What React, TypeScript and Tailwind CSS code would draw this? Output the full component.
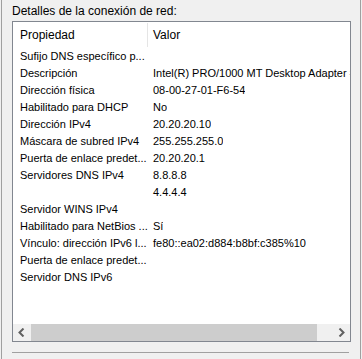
const rows: [string, string][] = [
  ["Sufijo DNS específico p...", ""],
  ["Descripción", "Intel(R) PRO/1000 MT Desktop Adapter #2"],
  ["Dirección física", "08-00-27-01-F6-54"],
  ["Habilitado para DHCP", "No"],
  ["Dirección IPv4", "20.20.20.10"],
  ["Máscara de subred IPv4", "255.255.255.0"],
  ["Puerta de enlace predet...", "20.20.20.1"],
  ["Servidores DNS IPv4", "8.8.8.8"],
  ["", "4.4.4.4"],
  ["Servidor WINS IPv4", ""],
  ["Habilitado para NetBios ...", "Sí"],
  ["Vínculo: dirección IPv6 l...", "fe80::ea02:d884:b8bf:c385%10"],
  ["Puerta de enlace predet...", ""],
  ["Servidor DNS IPv6", ""],
];

function Chevron({ dir }: { dir: "left" | "right" }) {
  return (
    <svg width="7" height="9" viewBox="0 0 7 9">
      <path
        d={dir === "left" ? "M5.5 0.5 L1.5 4.5 L5.5 8.5" : "M1.5 0.5 L5.5 4.5 L1.5 8.5"}
        fill="none"
        stroke="#606060"
        strokeWidth="2"
      />
    </svg>
  );
}

export default function App() {
  return (
    <div className="h-[359px] w-[362px] bg-[#f0f0f0] px-[1px] font-['Segoe_UI','Liberation_Sans',sans-serif] text-[12px] text-black">
      <div className="flex h-full flex-col border-x border-[#a0a0a0] pl-[10px]">
        <div className="mt-[4px] h-[15px] leading-[15px]">Detalles de la conexión de red:</div>
        <div className="mt-[2px] flex h-[321px] w-[339px] flex-col border border-[#828790] bg-white text-[11px]">
          <div className="flex h-[26px] items-center leading-[15px]">
            <div className="w-[134px] pl-[7px] text-[12px]">Propiedad</div>
            <div className="h-[24px] w-px bg-[#e5e5e5]" />
            <div className="pl-[5px] text-[12px]">Valor</div>
          </div>
          <div className="flex-1 overflow-hidden">
            {rows.map(([k, v], i) => (
              <div key={i} className="flex h-[17px] items-center whitespace-nowrap leading-[15px]">
                <div className="w-[135px] shrink-0 overflow-hidden pl-[7px]">{k}</div>
                <div className="overflow-hidden pl-[5px]">{v}</div>
              </div>
            ))}
          </div>
          <div className="flex h-[17px] bg-[#f0f0f0]">
            <div className="flex w-[17px] items-center justify-center">
              <Chevron dir="left" />
            </div>
            <div className="ml-[1px] w-[286px] bg-[#cdcdcd]" />
            <div className="flex-1" />
            <div className="flex w-[17px] items-center justify-center">
              <Chevron dir="right" />
            </div>
          </div>
        </div>
        <div className="mt-[10px] h-px w-[337px] bg-[#a0a0a0]" />
      </div>
    </div>
  );
}
